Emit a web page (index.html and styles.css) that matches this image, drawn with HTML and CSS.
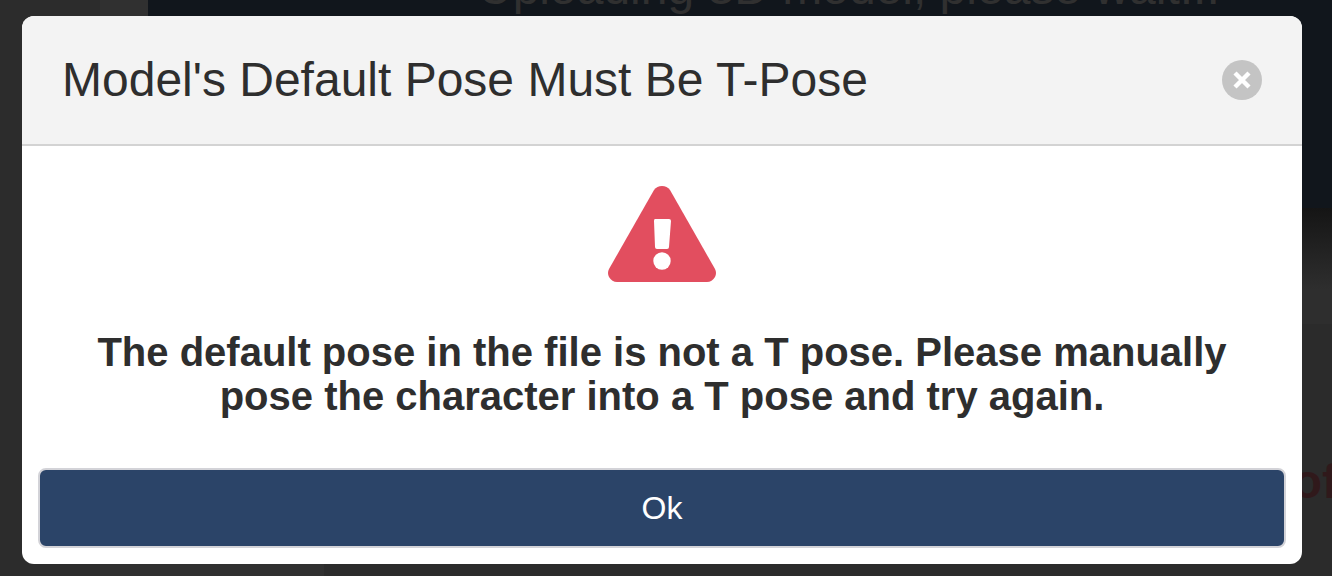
FILE: index.html
```html
<!DOCTYPE html>
<html lang="en">
<head>
    <meta charset="UTF-8">
    <meta name="viewport" content="width=device-width, initial-scale=1">
    <title>Model's Default Pose Must Be T-Pose</title>
    <link rel="stylesheet" href="styles.css">
</head>
<body>
    <div class="page" aria-hidden="true">
        <div class="sidebar"></div>
        <div class="viewer">
            <div class="scene">Uploading 3D model, please wait...</div>
            <div class="timeline"></div>
            <div class="notice">of</div>
        </div>
    </div>

    <div class="modal" role="dialog" aria-modal="true" aria-labelledby="modal-title">
        <div class="modal-header">
            <h1 id="modal-title">Model's Default Pose Must Be T-Pose</h1>
            <button type="button" class="close" aria-label="Close">
                <svg viewBox="0 0 40 40">
                    <path d="M13 13 L27 27 M27 13 L13 27" stroke="#fff" stroke-width="4.4"/>
                </svg>
            </button>
        </div>
        <div class="modal-body">
            <svg class="warning" viewBox="0 0 108 96">
                <path fill="#e24e5f" d="M46 4 Q49 0 54 0 Q59 0 62 4 L107 83 Q109 87 107 91 Q104 96 99 96 H9 Q4 96 1 91 Q-1 87 1 83 Z"/>
                <path fill="#fff" d="M47 33 H61 Q63 33 63 35 L61 61 Q61 63 59 63 H49 Q47 63 47 61 L46 35 Q46 33 47 33 Z"/>
                <circle fill="#fff" cx="54" cy="75" r="8.7"/>
            </svg>
            <p>The default pose in the file is not a T pose. Please manually pose the character into a T pose and try again.</p>
        </div>
        <div class="modal-footer">
            <button type="button" class="ok">Ok</button>
        </div>
    </div>
</body>
</html>
```

FILE: styles.css
```css
* {
    box-sizing: border-box;
}

body {
    margin: 0;
    min-height: 100vh;
    padding: 16px 30px 12px 22px;
    background-color: #2b2b2b;
    color: #2e2e2e;
    font-family: "Liberation Sans", Arial, sans-serif;
}

/* dimmed page behind the dialog */
.page {
    position: absolute;
    top: 0;
    right: 0;
    bottom: 0;
    left: 0;
    display: flex;
    overflow: hidden;
}

.sidebar {
    flex: none;
    width: 148px;
    background: linear-gradient(to right, #2c2c2c 100px, #303030 100px);
}

.viewer {
    flex: 1;
    min-width: 0;
    background: linear-gradient(to right, #303030 176px, #2b2b2b 176px);
}

/* the line of text is cut by the top of the window */
.scene {
    height: 248px;
    margin-top: -40px;
    padding-left: 330px;
    background-color: #11161c;
    color: #303030;
    font-size: 48px;
    line-height: 56px;
    white-space: nowrap;
}

.timeline {
    height: 116px;
    background: linear-gradient(#151515, #2e2e2e 70%, #2e2e2e);
}

.notice {
    margin-right: -6px;
    padding-top: 130px;
    color: #30191b;
    font-size: 48px;
    font-weight: bold;
    line-height: 56px;
    text-align: right;
}

.modal {
    position: relative;
    overflow: hidden;
    background-color: #fff;
    border-radius: 12px;
}

.modal-header {
    display: flex;
    align-items: center;
    justify-content: space-between;
    padding: 36px 40px;
    background-color: #f3f3f3;
    border-bottom: 2px solid #d3d3d3;
}

.modal-header h1 {
    margin: 0;
    font-size: 48px;
    font-weight: normal;
    line-height: 56px;
}

.close {
    width: 40px;
    height: 40px;
    padding: 0;
    border: none;
    border-radius: 50%;
    background-color: #c4c4c4;
    cursor: pointer;
}

.close svg {
    display: block;
}

.modal-body {
    padding: 40px 60px;
    text-align: center;
}

.warning {
    display: block;
    width: 108px;
    height: 96px;
    margin: 0 auto 48px;
}

.modal-body p {
    margin: 0;
    font-size: 40px;
    font-weight: bold;
    line-height: 44px;
}

.modal-footer {
    padding: 10px 16px 16px;
}

.ok {
    display: block;
    width: 100%;
    height: 80px;
    border: 2px solid #d3d3d8;
    border-radius: 8px;
    background-color: #2b4468;
    color: #fff;
    font-family: inherit;
    font-size: 32px;
    cursor: pointer;
}
```
